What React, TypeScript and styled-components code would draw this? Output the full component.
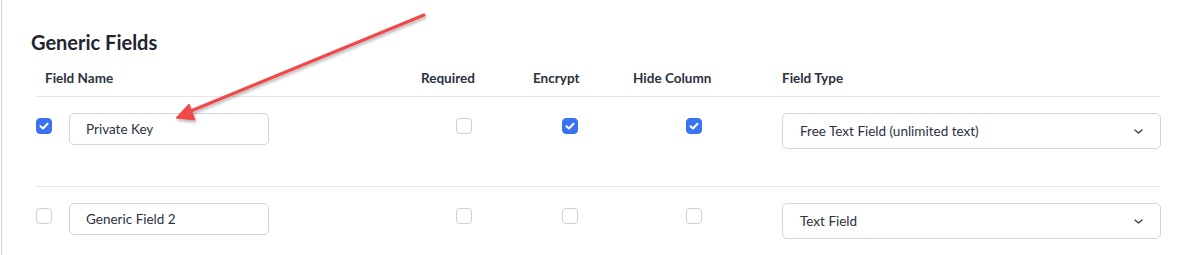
import styled, { createGlobalStyle } from "styled-components";

const GlobalStyle = createGlobalStyle`
  body {
    margin: 0;
    background: #ffffff;
    font-family: Lato, "Noto Sans", sans-serif;
    color: #2b3140;
  }
`;

const columns = "385px 112px 100px 149px 378px";

type Field = {
  name: string;
  selected: boolean;
  required: boolean;
  encrypt: boolean;
  hide: boolean;
  type: string;
};

const fields: Field[] = [
  { name: "Private Key", selected: true, required: false, encrypt: true, hide: true, type: "Free Text Field (unlimited text)" },
  { name: "Generic Field 2", selected: false, required: false, encrypt: false, hide: false, type: "Text Field" },
];

function Check({ on }: { on: boolean }) {
  return (
    <Box $on={on}>
      {on && (
        <svg width="10" height="8" viewBox="0 0 10 8">
          <path d="M1.5 4.2 L4 6.5 L8.5 1.8" fill="none" stroke="#fff" strokeWidth="2" strokeLinecap="round" strokeLinejoin="round" />
        </svg>
      )}
    </Box>
  );
}

function Chevron() {
  return (
    <svg width="9" height="5" viewBox="0 0 9 5">
      <path d="M1 1 L4.5 4 L8 1" fill="none" stroke="#3a3f4b" strokeWidth="1.4" strokeLinecap="round" strokeLinejoin="round" />
    </svg>
  );
}

export default function App() {
  return (
    <>
      <GlobalStyle />
      <Page>
        <Title>Generic Fields</Title>
        <Table>
          <HeaderRow>
            <HeadCell $pad={9}>Field Name</HeadCell>
            <HeadCell>Required</HeadCell>
            <HeadCell>Encrypt</HeadCell>
            <HeadCell>Hide Column</HeadCell>
            <HeadCell>Field Type</HeadCell>
          </HeaderRow>
          {fields.map((f) => (
            <Row key={f.name}>
              <NameCell>
                <Check on={f.selected} />
                <TextInput>{f.name}</TextInput>
              </NameCell>
              <CheckCell $pad={35}>
                <Check on={f.required} />
              </CheckCell>
              <CheckCell $pad={29}>
                <Check on={f.encrypt} />
              </CheckCell>
              <CheckCell $pad={53}>
                <Check on={f.hide} />
              </CheckCell>
              <Select>
                <span>{f.type}</span>
                <Chevron />
              </Select>
            </Row>
          ))}
        </Table>
        <Arrow width="1187" height="255" viewBox="0 0 1187 255">
          <defs>
            <filter id="sh" x="-20%" y="-20%" width="140%" height="140%">
              <feDropShadow dx="1" dy="2" stdDeviation="1.5" floodColor="#000" floodOpacity="0.3" />
            </filter>
          </defs>
          <g filter="url(#sh)" fill="#f04a4a" stroke="#f04a4a">
            <line x1="424" y1="15" x2="186" y2="113" strokeWidth="3" strokeLinecap="round" />
            <polygon points="176,118 189,104 195,120" strokeWidth="1" strokeLinejoin="round" />
          </g>
        </Arrow>
      </Page>
    </>
  );
}

const Page = styled.div`
  position: relative;
  width: 1186px;
  height: 255px;
  margin-left: 1px;
  border-left: 1px solid #d2d3da;
  box-sizing: border-box;
  padding-top: 30px;
  overflow: hidden;
`;

const Title = styled.h2`
  margin: 0 0 14px 29px;
  font-size: 20px;
  line-height: 25px;
  font-weight: 700;
  color: #1f2533;
`;

const Table = styled.div`
  margin-left: 34px;
  width: 1124px;
`;

const HeaderRow = styled.div`
  display: grid;
  grid-template-columns: ${columns};
  padding-bottom: 9px;
  border-bottom: 1px solid #e3e4ea;
`;

const HeadCell = styled.div<{ $pad?: number }>`
  padding-left: ${(p) => p.$pad ?? 0}px;
  font-size: 13.5px;
  line-height: 18px;
  font-weight: 700;
  color: #2b3140;
`;

const Row = styled.div`
  display: grid;
  grid-template-columns: ${columns};
  align-items: start;
  padding: 16px 0 37px;
  border-bottom: 1px solid #e3e4ea;
  &:last-child {
    border-bottom: none;
  }
`;

const NameCell = styled.div`
  display: flex;
  align-items: flex-start;
  gap: 17px;
  & > :first-child {
    margin-top: 5px;
  }
`;

const CheckCell = styled.div<{ $pad: number }>`
  padding-left: ${(p) => p.$pad}px;
  padding-top: 5px;
`;

const Box = styled.div<{ $on: boolean }>`
  width: 16px;
  height: 16px;
  box-sizing: border-box;
  border-radius: 4px;
  display: flex;
  align-items: center;
  justify-content: center;
  background: ${(p) => (p.$on ? "#3b72f2" : "#ffffff")};
  border: 1px solid ${(p) => (p.$on ? "#3b72f2" : "#cdd0da")};
`;

const TextInput = styled.div`
  width: 200px;
  height: 32px;
  box-sizing: border-box;
  border: 1px solid #d3d5de;
  border-radius: 5px;
  padding-left: 16px;
  display: flex;
  align-items: center;
  font-size: 13.5px;
  color: #2b3140;
`;

const Select = styled.div`
  width: 379px;
  height: 36px;
  box-sizing: border-box;
  border: 1px solid #d3d5de;
  border-radius: 5px;
  padding: 0 17px 0 17px;
  display: flex;
  align-items: center;
  justify-content: space-between;
  font-size: 13.5px;
  color: #2b3140;
`;

const Arrow = styled.svg`
  position: absolute;
  left: -2px;
  top: 0;
  pointer-events: none;
`;
